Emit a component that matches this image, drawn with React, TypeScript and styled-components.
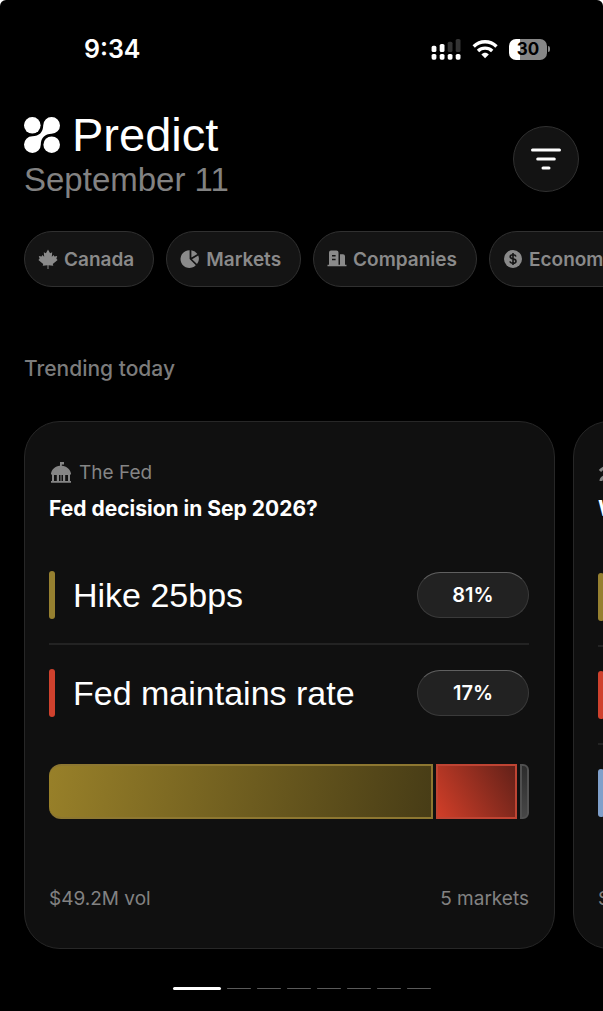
import React from "react";
import styled, { createGlobalStyle } from "styled-components";

const Global = createGlobalStyle`
  * { box-sizing: border-box; }
  html { background: #fff; }
  body { margin: 0; font-family: Inter, "Liberation Sans", sans-serif; color: #fff; }
  h1, h2, h3, p, ul { margin: 0; padding: 0; }
  ul { list-style: none; }
  button { font: inherit; color: inherit; cursor: pointer; }
`;

const Screen = styled.main`
  min-height: 100vh;
  overflow: hidden;
  background: #000;
  border-radius: 6px 6px 0 0;
`;

const StatusBar = styled.div`
  display: flex;
  align-items: center;
  justify-content: space-between;
  height: 98px;
  padding: 0 53px 0 84px;
`;

const Clock = styled.time`
  font-size: 25px;
  line-height: 30px;
  font-weight: 600;
`;

const StatusIcons = styled.div`
  display: flex;
  align-items: center;
  gap: 11px;
  svg { display: block; }
`;

const Battery = styled.div`
  display: flex;
  align-items: center;
  gap: 1px;
`;

const BatteryBody = styled.span<{ $level: number }>`
  width: 38px;
  height: 21px;
  border-radius: 7px;
  background: linear-gradient(90deg, #fff ${(p) => p.$level}%, #868686 ${(p) => p.$level}%);
  color: #000;
  font-size: 17px;
  line-height: 21px;
  font-weight: 700;
  text-align: center;
`;

const BatteryTip = styled.span`
  width: 2px;
  height: 6px;
  border-radius: 0 2px 2px 0;
  background: #868686;
`;

const Header = styled.header`
  display: flex;
  align-items: center;
  justify-content: space-between;
  padding: 14px 24px 0;
`;

const Brand = styled.div`
  display: flex;
  align-items: center;
  gap: 12px;
  height: 46px;
`;

const Title = styled.h1`
  font-family: "Liberation Sans", Arial, sans-serif;
  font-size: 47px;
  line-height: 48px;
  font-weight: 400;
`;

const Today = styled.p`
  font-family: "Liberation Sans", Arial, sans-serif;
  font-size: 33px;
  line-height: 44px;
  color: #828282;
`;

const FilterButton = styled.button`
  display: grid;
  place-items: center;
  width: 66px;
  height: 66px;
  margin-top: 4px;
  padding: 0;
  border: 1px solid #303030;
  border-radius: 50%;
  background: #131313;
`;

const Chips = styled.nav`
  display: flex;
  gap: 12px;
  padding: 29px 0 0 24px;
  overflow: hidden;
`;

const Chip = styled.button`
  display: flex;
  flex: none;
  align-items: center;
  gap: 6px;
  height: 56px;
  padding: 0 19px 0 13px;
  border: 1px solid #303030;
  border-radius: 28px;
  background: #141414;
  color: #8a8a8a;
  font-size: 19px;
  font-weight: 600;
  white-space: nowrap;
`;

const SectionTitle = styled.h2`
  padding: 68px 24px 0;
  font-size: 21px;
  line-height: 28px;
  font-weight: 500;
  color: #7c7c7c;
`;

const Carousel = styled.section`
  display: flex;
  gap: 18px;
  padding: 38px 0 0 24px;
  overflow: hidden;
`;

const Card = styled.article`
  display: flex;
  flex: none;
  flex-direction: column;
  width: calc(100% - 48px);
  min-height: 528px;
  padding: 35px 25px 34px 24px;
  border: 1px solid #272727;
  border-radius: 36px;
  background: #101010;
`;

const Category = styled.p`
  display: flex;
  align-items: center;
  gap: 6px;
  height: 32px;
  color: #858585;
  font-size: 19px;
  line-height: 32px;
`;

const Question = styled.h3`
  margin-top: 4px;
  font-size: 21px;
  line-height: 32px;
  font-weight: 700;
  white-space: nowrap;
`;

const Outcomes = styled.ul<{ $charted: boolean }>`
  margin: ${(p) => (p.$charted ? 22 : 24)}px 0 23px;
`;

const Outcome = styled.li`
  display: flex;
  align-items: center;
  padding: 24px 0;
  & + & { border-top: 2px solid #232323; }
`;

const Marker = styled.span<{ $color: string }>`
  width: 6px;
  height: 48px;
  border-radius: 3px;
  background: ${(p) => p.$color};
`;

const OutcomeName = styled.span`
  flex: 1;
  margin-left: 18px;
  font-family: "Liberation Sans", Arial, sans-serif;
  font-size: 34px;
  line-height: 48px;
  white-space: nowrap;
`;

const OddsButton = styled.button`
  width: 112px;
  height: 46px;
  padding: 0;
  border: 1px solid #3a3a3a;
  border-top-color: #606060;
  border-radius: 23px;
  background: #222;
  font-size: 20px;
  font-weight: 600;
`;

const ShareBar = styled.div<{ $columns: string }>`
  display: grid;
  grid-template-columns: ${(p) => p.$columns};
  gap: 3px;
  height: 55px;
`;

const Share = styled.span<{ $fill: string; $edge: string }>`
  border: 2px solid ${(p) => p.$edge};
  background: ${(p) => p.$fill} border-box;
  &:first-child { border-left: 0; border-radius: 12px 0 0 12px; }
  &:last-child { border-radius: 0 6px 6px 0; }
`;

const CardFooter = styled.footer`
  display: flex;
  justify-content: space-between;
  margin-top: auto;
  color: #828282;
  font-size: 19px;
  line-height: 30px;
`;

const Pager = styled.div`
  display: flex;
  align-items: center;
  justify-content: center;
  gap: 6px;
  height: 78px;
`;

const Page = styled.span<{ $active: boolean }>`
  width: ${(p) => (p.$active ? 48 : 24)}px;
  height: ${(p) => (p.$active ? 3 : 1)}px;
  border-radius: 2px;
  background: ${(p) => (p.$active ? "#fff" : "#5a5a5a")};
`;

const SignalIcon = () => (
  <svg width="30" height="21" viewBox="0 0 30 21" fill="#fff" aria-label="Signal">
    <rect x="0.6" y="6.8" width="4.8" height="6.2" rx="1.6" />
    <rect x="8.7" y="5" width="4.8" height="8" rx="1.6" />
    <rect x="16.7" y="2.7" width="4.8" height="10.3" rx="1.6" fill="#343434" />
    <rect x="24.7" y="0" width="4.8" height="13" rx="1.6" fill="#343434" />
    {[0.6, 8.7, 16.7, 24.7].map((x) => (
      <rect key={x} x={x} y="15" width="4.8" height="5.7" rx="1.6" />
    ))}
  </svg>
);

const WifiIcon = () => (
  <svg width="26" height="20" viewBox="0 0 26 20" fill="none" stroke="#fff" strokeWidth="3.4" aria-label="Wi-Fi">
    <path d="M1.7 7.4C8.2 1.2 18 1.2 24.5 7.4" />
    <path d="M6 12C10 8.2 16.2 8.2 20.2 12" />
    <path d="M9.4 15.5C11.5 13.3 14.7 13.3 16.8 15.5L13.1 19.3Z" fill="#fff" stroke="none" />
  </svg>
);

const LogoIcon = () => (
  <svg width="36" height="36" viewBox="0 0 36 36" fill="#fff" aria-hidden="true">
    <circle cx="8.3" cy="8.3" r="8.3" />
    <circle cx="27.7" cy="27.7" r="8.3" />
    <path d="M27.6 0A8.4 8.4 0 0 1 27.6 16.8C21 16.8 16.8 21 16.8 27.6A8.4 8.4 0 1 1 8.4 19.2C15 19.2 19.2 15 19.2 8.4A8.4 8.4 0 0 1 27.6 0Z" />
  </svg>
);

const FilterIcon = () => (
  <svg width="30" height="22" viewBox="0 0 30 22" fill="none" stroke="#fff" strokeWidth="3" strokeLinecap="round" aria-hidden="true">
    <path d="M1.5 2H28.5M6.7 11H23.3M12 20H18" />
  </svg>
);

const MapleIcon = () => (
  <svg width="20" height="20" viewBox="0 0 20 20" fill="currentColor" aria-hidden="true">
    <path d="M10 .5L12.1 4.2L14.2 3.2L13.8 7.8L15.7 6L16.4 7.5L19.2 7L18.4 9.8L19.6 10.9L14.8 15L15.3 16.8L10.5 16.2V20H9.5V16.2L4.7 16.8L5.2 15L.4 10.9L1.6 9.8L.8 7L3.6 7.5L4.3 6L6.2 7.8L5.8 3.2L7.9 4.2Z" />
  </svg>
);

const PieIcon = () => (
  <svg width="20" height="20" viewBox="0 0 20 20" fill="currentColor" aria-hidden="true">
    <path d="M9.6 1.2V10L15.8 16.3A8.9 8.9 0 1 1 9.6 1.2Z" />
    <path d="M11.4 1.2A8.8 8.8 0 0 1 17.4 5L11.4 8.4Z" />
    <path d="M18.3 6.6A8.8 8.8 0 0 1 17 15L12 10.2Z" />
  </svg>
);

const BuildingsIcon = () => (
  <svg width="20" height="20" viewBox="0 0 20 20" fill="currentColor" aria-hidden="true">
    <path fillRule="evenodd" d="M2 15.8V3.5Q2 1.5 4 1.5H9.5Q11.5 1.5 11.5 3.5V15.8H13V5.3H16Q18 5.3 18 7.3V15.8H19.5V17.3H.5V15.8ZM5 6V7.5H8.6V6ZM5 9.8V11.3H8.6V9.8Z" />
  </svg>
);

const DollarIcon = () => (
  <svg width="20" height="20" viewBox="0 0 20 20" aria-hidden="true">
    <circle cx="10" cy="10" r="9" fill="currentColor" />
    <path d="M13 7.5Q12.4 5.8 10 5.8Q7.2 5.8 7.2 7.8Q7.2 9.4 10 9.9Q13 10.4 13 12.2Q13 14.2 10 14.2Q7.4 14.2 6.9 12.4M10 4V16" fill="none" stroke="#141414" strokeWidth="1.6" />
  </svg>
);

const CapitolIcon = () => (
  <svg width="24" height="24" viewBox="0 0 24 24" fill="currentColor" aria-hidden="true">
    <path fillRule="evenodd" d="M11 1H15V3.6H12.8V4.8C17.6 5.2 21.2 8.4 22 12.4V13.6H21V20H22V21.7H2V20H3V13.6H2V12.4C2.8 8.4 6.2 5.2 11 4.8ZM5 14V20H7.8V14ZM10 14V20H14V14ZM16.2 14V20H19V14Z" />
    <path d="M11.5 14H12.5V20H11.5Z" />
  </svg>
);

const SportsIcon = () => (
  <svg width="24" height="24" viewBox="0 0 24 24" fill="none" stroke="currentColor" strokeWidth="3" aria-hidden="true">
    <path d="M2 10Q5 6 12 6T22 10M3 20Q3 15 12 15T21 20" />
  </svg>
);

const chips = [
  { label: "Canada", Icon: MapleIcon },
  { label: "Markets", Icon: PieIcon },
  { label: "Companies", Icon: BuildingsIcon },
  { label: "Economy", Icon: DollarIcon },
];

const GOLD = "#968030";
const RED = "#cf412d";
const BLUE = "#7f9fca";

type CardData = {
  category: string;
  Icon: React.FC;
  question: string;
  outcomes: { name: string; odds: string; color: string }[];
  shares?: { share: number; fill: string; edge: string }[];
  volume: string;
  markets: string;
};

const cards: CardData[] = [
  {
    category: "The Fed",
    Icon: CapitolIcon,
    question: "Fed decision in Sep 2026?",
    outcomes: [
      { name: "Hike 25bps", odds: "81%", color: GOLD },
      { name: "Fed maintains rate", odds: "17%", color: RED },
    ],
    shares: [
      { share: 81, fill: "linear-gradient(98deg, #988029, #473c16)", edge: "#8d7731" },
      { share: 17, fill: "linear-gradient(60deg, #d43f29, #5f2018)", edge: "#bf4433" },
      { share: 2, fill: "linear-gradient(0deg, #484848, #2b2b2b)", edge: "#505050" },
    ],
    volume: "$49.2M vol",
    markets: "5 markets",
  },
  {
    category: "Sports",
    Icon: SportsIcon,
    question: "Who wins?",
    outcomes: [
      { name: "Home", odds: "50%", color: GOLD },
      { name: "Away", odds: "30%", color: RED },
      { name: "Draw", odds: "20%", color: BLUE },
    ],
    volume: "$10M vol",
    markets: "3 markets",
  },
];

export default function App() {
  return (
    <>
      <Global />
      <Screen>
        <StatusBar>
          <Clock>9:34</Clock>
          <StatusIcons>
            <SignalIcon />
            <WifiIcon />
            <Battery>
              <BatteryBody $level={30}>30</BatteryBody>
              <BatteryTip />
            </Battery>
          </StatusIcons>
        </StatusBar>
        <Header>
          <div>
            <Brand>
              <LogoIcon />
              <Title>Predict</Title>
            </Brand>
            <Today>September 11</Today>
          </div>
          <FilterButton aria-label="Filter">
            <FilterIcon />
          </FilterButton>
        </Header>
        <Chips aria-label="Topics">
          {chips.map(({ label, Icon }) => (
            <Chip key={label}>
              <Icon />
              {label}
            </Chip>
          ))}
        </Chips>
        <SectionTitle>Trending today</SectionTitle>
        <Carousel>
          {cards.map(({ category, Icon, question, outcomes, shares, volume, markets }) => (
            <Card key={question}>
              <Category>
                <Icon />
                {category}
              </Category>
              <Question>{question}</Question>
              <Outcomes $charted={!!shares}>
                {outcomes.map((o) => (
                  <Outcome key={o.name}>
                    <Marker $color={o.color} />
                    <OutcomeName>{o.name}</OutcomeName>
                    <OddsButton>{o.odds}</OddsButton>
                  </Outcome>
                ))}
              </Outcomes>
              {shares && (
                <ShareBar $columns={shares.map((s) => `${s.share}fr`).join(" ")}>
                  {shares.map((s) => (
                    <Share key={s.share} $fill={s.fill} $edge={s.edge} />
                  ))}
                </ShareBar>
              )}
              <CardFooter>
                <span>{volume}</span>
                <span>{markets}</span>
              </CardFooter>
            </Card>
          ))}
        </Carousel>
        <Pager>
          {[0, 1, 2, 3, 4, 5, 6, 7].map((i) => (
            <Page key={i} $active={i === 0} />
          ))}
        </Pager>
      </Screen>
    </>
  );
}
